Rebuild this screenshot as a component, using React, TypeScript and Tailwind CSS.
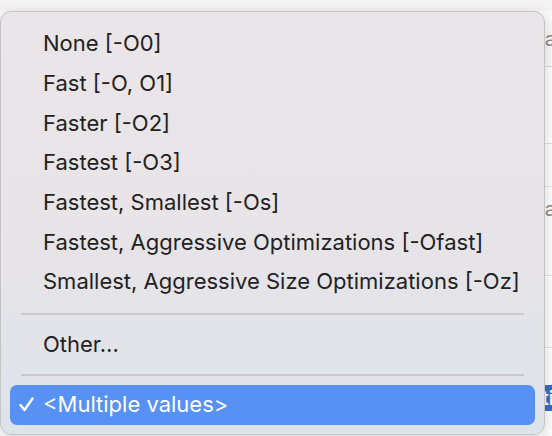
import React from "react";

const items = [
  "None [-O0]",
  "Fast [-O, O1]",
  "Faster [-O2]",
  "Fastest [-O3]",
  "Fastest, Smallest [-Os]",
  "Fastest, Aggressive Optimizations [-Ofast]",
  "Smallest, Aggressive Size Optimizations [-Oz]",
];

export default function App() {
  return (
    <div
      className="relative w-[552px] h-[436px] overflow-hidden bg-[#f4f4f4]"
      style={{ fontFamily: "Inter, 'Noto Sans', sans-serif" }}
    >
      {/* background window content (right strip) */}
      <div className="flex flex-col w-full h-full pt-[11px]">
        <div className="h-[56px] bg-[#fafafa] border-b border-[#dcdcdc] flex items-center justify-end text-[20px] text-[#8a8a8a]">
          <span className="-mr-[4px]">a</span>
        </div>
        <div className="h-[77px] bg-white border-b border-[#e2e2e2]" />
        <div className="h-[43px] bg-white border-b border-[#e2e2e2]" />
        <div className="h-[89px] bg-white border-b border-[#e2e2e2] flex items-center justify-end text-[20px] text-[#8a8a8a]">
          <span className="-mr-[4px] mt-[-44px]">a</span>
        </div>
        <div className="h-[72px] bg-white border-b border-[#e2e2e2]" />
        <div className="h-[37px] bg-white" />
        <div className="h-[26px] bg-[#3a6cc8] flex items-center justify-end text-[20px] text-white font-semibold">
          <span className="-mr-[2px]">ti</span>
        </div>
        <div className="flex-1 bg-white" />
      </div>

      {/* popup menu */}
      <div className="absolute left-0 top-[11px] w-[545px] h-[424px] rounded-[11px] border border-[#c4c4c6] bg-gradient-to-b from-[#e9e5e9] via-[#e8e4e8] to-[#dde3ea] shadow-[0_4px_14px_rgba(0,0,0,0.18)] flex flex-col pt-[12px] text-[#222222] text-[22px]">
        {items.map((t) => (
          <div key={t} className="h-[39.67px] flex items-center pl-[42px]">
            {t}
          </div>
        ))}
        <div className="mt-[11px] mx-[20px] h-[2px] bg-[#cbc8cc]" />
        <div className="mt-[10px] h-[40px] flex items-center pl-[42px]">Other...</div>
        <div className="mt-[9px] mx-[20px] h-[2px] bg-[#cbc9cd]" />
        <div className="mt-[9px] mx-[9px] h-[40px] rounded-[7px] bg-[#5891f4] flex items-center text-white">
          <span className="w-[33px] flex justify-center">
            <svg width="15" height="15" viewBox="0 0 15 15" fill="none">
              <path d="M1.5 8 L5.5 13 L13.5 1.5" stroke="white" strokeWidth="2.4" strokeLinecap="round" strokeLinejoin="round" />
            </svg>
          </span>
          <span>&lt;Multiple values&gt;</span>
        </div>
      </div>
    </div>
  );
}
